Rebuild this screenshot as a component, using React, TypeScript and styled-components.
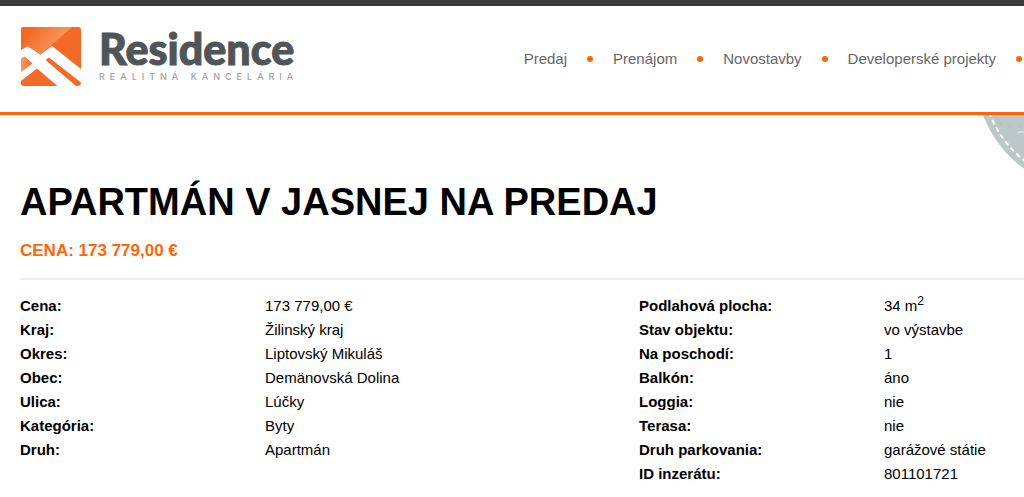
import React from 'react';
import styled, { createGlobalStyle } from 'styled-components';

const GlobalStyle = createGlobalStyle`
  * { box-sizing: border-box; }
  body {
    margin: 0;
    background: #fff;
    color: #000;
    font: 15px/24px "Liberation Sans", Arial, sans-serif;
    overflow-x: hidden;
  }
`;

const Header = styled.header`
  display: flex;
  align-items: flex-start;
  justify-content: space-between;
  padding: 21px 2px 25px 20px;
  border-top: 6px solid #3a3b3d;
  border-bottom: 3px solid #ff660a;
`;

const Brand = styled.a`
  display: flex;
  align-items: flex-start;
  gap: 18px;
  color: #505557;
  text-decoration: none;
`;

const BrandText = styled.span`
  display: flex;
  flex-direction: column;
`;

const BrandName = styled.span`
  font: 900 43px/44px Lato, sans-serif;
  -webkit-text-stroke: 1px currentColor;
`;

const Tagline = styled.span`
  font: 500 9px/12px Inter, sans-serif;
  letter-spacing: 5px;
  color: #a0a2a3;
  white-space: nowrap;
`;

const Nav = styled.nav`
  padding-top: 20px;
`;

const NavList = styled.ul`
  display: flex;
  margin: 0;
  padding: 0;
  gap: 20px;
  list-style: none;
`;

const NavItem = styled.li`
  display: flex;
  align-items: center;
  gap: 20px;
  white-space: nowrap;

  &::after {
    content: "";
    width: 6px;
    height: 6px;
    border-radius: 50%;
    background: #ff660a;
  }
`;

const NavLink = styled.a`
  color: #666;
  text-decoration: none;
`;

const Main = styled.main`
  position: relative;
  padding: 64px 0 8px 20px;
`;

const Seal = styled.svg`
  position: absolute;
  top: 0;
  right: 0;
`;

const Title = styled.h1`
  margin: 0;
  font-size: 38px;
  line-height: 46px;
  text-transform: uppercase;
`;

const Price = styled.p`
  margin: 0;
  padding: 14px 0 15px;
  border-bottom: 2px solid #eee;
  color: #ff660a;
  font-size: 17px;
  font-weight: bold;
`;

const Details = styled.div`
  display: grid;
  grid-template-columns: 619fr 385fr;
  align-items: start;
  padding-top: 14px;
`;

const DetailList = styled.dl<{ $columns: string }>`
  display: grid;
  grid-template-columns: ${(p) => p.$columns};
  margin: 0;
`;

const Term = styled.dt`
  font-weight: bold;
`;

const Value = styled.dd`
  margin: 0;

  sup {
    font-size: 12px;
    line-height: 0;
  }
`;

const links = ['Predaj', 'Prenájom', 'Novostavby', 'Developerské projekty'];

const location: [string, React.ReactNode][] = [
  ['Cena:', '173 779,00 €'],
  ['Kraj:', 'Žilinský kraj'],
  ['Okres:', 'Liptovský Mikuláš'],
  ['Obec:', 'Demänovská Dolina'],
  ['Ulica:', 'Lúčky'],
  ['Kategória:', 'Byty'],
  ['Druh:', 'Apartmán'],
];

const features: [string, React.ReactNode][] = [
  ['Podlahová plocha:', <>34 m<sup>2</sup></>],
  ['Stav objektu:', 'vo výstavbe'],
  ['Na poschodí:', '1'],
  ['Balkón:', 'áno'],
  ['Loggia:', 'nie'],
  ['Terasa:', 'nie'],
  ['Druh parkovania:', 'garážové státie'],
  ['ID inzerátu:', '801101721'],
];

function Facts({ items, columns }: { items: [string, React.ReactNode][]; columns: string }) {
  return (
    <DetailList $columns={columns}>
      {items.map(([term, value]) => (
        <React.Fragment key={term}>
          <Term>{term}</Term>
          <Value>{value}</Value>
        </React.Fragment>
      ))}
    </DetailList>
  );
}

function LogoMark() {
  return (
    <svg width="61" height="60" viewBox="0 0 61 60" aria-hidden="true">
      <defs>
        <linearGradient id="shine" gradientUnits="userSpaceOnUse" x1="8" y1="4" x2="34" y2="20">
          <stop offset="0" stopColor="#f26a25" />
          <stop offset="1" stopColor="#f7935a" />
        </linearGradient>
        <linearGradient id="shineLow" x1="0" y1="0" x2="1" y2="0">
          <stop offset="0" stopColor="#f79a66" />
          <stop offset="1" stopColor="#f26a25" />
        </linearGradient>
      </defs>
      <g transform="translate(1 0)">
        <path d="M0 23V3Q0 0 3 0H57Q60 0 60 3V42L31 19L19.5 27.5L6.500 19Z" fill="#f26a25" />
        <path d="M0 23V3Q0 0 3 0H51L19.500 27.500L6.500 19Z" fill="url(#shine)" />
        <path d="M0 31.500L3.500 29.500L11.500 36.500L0 45Z" fill="url(#shineLow)" />
        <path d="M0 54L16 41.500L36.500 59H3Q0 59 0 56Z" fill="#f26a25" />
        <path d="M24.500 33L28 30.500L60 55.500Q60 59 56 59H55Z" fill="#f26a25" />
      </g>
    </svg>
  );
}

export default function App() {
  return (
    <>
      <GlobalStyle />
      <Header>
        <Brand href="#">
          <LogoMark />
          <BrandText>
            <BrandName>Residence</BrandName>
            <Tagline>REALITNÁ KANCELÁRIA</Tagline>
          </BrandText>
        </Brand>
        <Nav>
          <NavList>
            {links.map((label) => (
              <NavItem key={label}>
                <NavLink href="#">{label}</NavLink>
              </NavItem>
            ))}
          </NavList>
        </Nav>
      </Header>
      <Main>
        <Seal width="44" height="56" viewBox="980 115 44 56" aria-hidden="true">
          <circle cx="1091.500" cy="74.700" r="115.700" fill="#bcc8c8" />
          <circle cx="1091.500" cy="74.700" r="109" fill="none" stroke="#fff" strokeWidth="2" strokeDasharray="5 3.300" />
          <path d="M1018 133Q1019 131.500 1024 132" fill="none" stroke="#e4eaea" strokeWidth="1.200" />
          <path d="M1000 124h1M1009 127h1M1019 127h1" stroke="#a9b6b6" />
        </Seal>
        <Title>Apartmán v Jasnej na predaj</Title>
        <Price>CENA: 173 779,00 €</Price>
        <Details>
          <Facts items={location} columns="245fr 374fr" />
          <Facts items={features} columns="245fr 140fr" />
        </Details>
      </Main>
    </>
  );
}
